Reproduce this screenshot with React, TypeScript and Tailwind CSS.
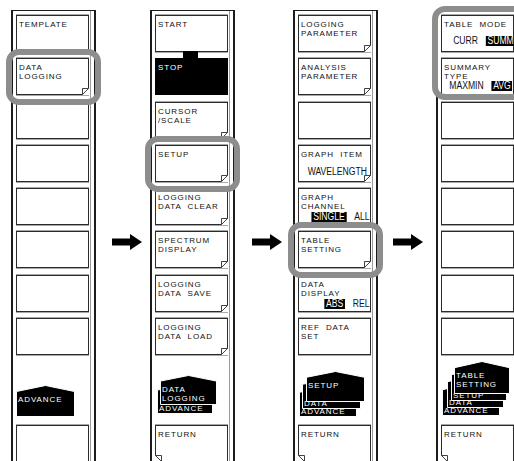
import type { ReactNode } from "react";

const label = "font-['Liberation_Sans',Arial,sans-serif] text-[8px] leading-[9px] tracking-[0.9px] uppercase";
const value = "font-['Liberation_Sans',Arial,sans-serif] text-[10px] leading-[10px]";

function Fold({ side }: { side: "r" | "l" }) {
  if (side === "r") {
    return (
      <svg className="absolute -right-px -bottom-px" width="7" height="7" viewBox="0 0 7 7">
        <polygon points="7,0 7,7 0,7" fill="#fff" />
        <polygon points="0.5,6.5 6.5,0.5 0.5,0.5" fill="#fff" stroke="#2b2b2b" strokeWidth="0.9" />
      </svg>
    );
  }
  return (
    <svg className="absolute -bottom-px -left-px" width="7" height="7" viewBox="0 0 7 7">
      <polygon points="0,0 0,7 7,7" fill="#fff" />
      <polygon points="6.5,6.5 0.5,0.5 6.5,0.5" fill="#fff" stroke="#2b2b2b" strokeWidth="0.9" />
    </svg>
  );
}

function Ring({ className }: { className: string }) {
  return <div className={`pointer-events-none absolute z-10 rounded-[13px] border-[6px] border-[#8d8d8d] ${className}`} />;
}

function Key({
  lines = [],
  mark,
  children,
}: {
  lines?: string[];
  mark?: "r" | "l";
  children?: ReactNode;
}) {
  return (
    <div className="relative h-[37px] shrink-0 border border-[#2b2b2b] bg-white pt-[4px] pr-[1px] pl-[2px] text-[#111] shadow-[0_1px_0_#a8a8a8,0_-1px_0_#a8a8a8]">
      {lines.length ? (
        <div className={label}>
          {lines.map((l) => (
            <div key={l} className="whitespace-pre">
              {l}
            </div>
          ))}
        </div>
      ) : null}
      {children}
      {mark ? <Fold side={mark} /> : null}
    </div>
  );
}

function Val({ items, className = "" }: { items: [string, boolean][]; className?: string }) {
  return (
    <div className={`flex justify-end ${className}`}>
      <div className={`flex origin-right scale-x-[0.86] gap-[9px] ${value}`}>
        {items.map(([t, on]) => (
          <span key={t} className={on ? "bg-black px-[2px] text-white" : ""}>
            {t}
          </span>
        ))}
      </div>
    </div>
  );
}

function Layer({ className, lines, front }: { className: string; lines: string[]; front?: boolean }) {
  return (
    <div className={`absolute ${className}`}>
      <svg className="absolute inset-0 h-full w-full" viewBox="0 0 60 32" preserveAspectRatio="none">
        <polygon
          points="0.5,6.5 30,0.5 59.5,6.5 59.5,31.5 0.5,31.5"
          fill="#000"
          stroke="#fff"
          strokeWidth="1"
          vectorEffect="non-scaling-stroke"
        />
      </svg>
      <div
        className={`absolute left-[2px] text-white ${label} ${
          front ? "top-[10px]" : "bottom-[1px] text-[7px] leading-[5px]"
        }`}
      >
        {lines.map((l) => (
          <div key={l}>{l}</div>
        ))}
      </div>
    </div>
  );
}

function Frame({ children }: { children: ReactNode }) {
  return (
    <div className="flex h-[460px] w-[85px] shrink-0 border-t border-r-2 border-l-2 border-[#1c1c1c]">
      <div className="flex w-[76px] shrink-0 flex-col gap-[6.3px] pt-[4px] pl-[3px]">{children}</div>
      <div className="w-px shrink-0" />
      <div className="w-px shrink-0 bg-[#9a9a9a]" />
      <div className="w-[3px] shrink-0" />
    </div>
  );
}

function Arrow({ className }: { className: string }) {
  return (
    <div className={className}>
      <svg width="30" height="16" viewBox="0 0 30 16">
        <polygon points="0,4.5 18,4.5 18,0 30,8 18,16 18,11.5 0,11.5" fill="#000" />
      </svg>
    </div>
  );
}

export default function App() {
  return (
    <div className="relative h-[461px] w-[514px] overflow-hidden bg-white">
      <div className="flex items-start pt-[10px] pl-[11px]">
        <Frame>
          <Key lines={["TEMPLATE"]} />
          <div className="relative">
            <Key lines={["DATA", "LOGGING"]} mark="r" />
            <Ring className="-top-[9px] -right-[12px] -bottom-[10px] -left-[10px]" />
          </div>
          <Key />
          <Key />
          <Key />
          <Key />
          <Key />
          <Key />
          <div className="relative h-[57px] shrink-0">
            <Layer className="top-[24px] left-0 h-[32px] w-[59px]" lines={["ADVANCE"]} front />
          </div>
          <Key />
        </Frame>

        <Arrow className="w-[54px] shrink-0 pt-[224px] pl-[16px]" />

        <Frame>
          <Key lines={["START"]} />
          <div className="relative h-[37px] shrink-0 bg-black pt-[5px] pl-[3px]">
            <div className={`${label} text-white`}>STOP</div>
            <div className="absolute -top-[7px] left-[28px] h-[8px] w-[15px] bg-black" />
          </div>
          <Key lines={["CURSOR", "/SCALE"]} mark="r" />
          <div className="relative">
            <Key lines={["SETUP"]} mark="r" />
            <Ring className="-top-[9px] -right-[12px] -bottom-[10px] -left-[10px]" />
          </div>
          <Key lines={["LOGGING", "DATA  CLEAR"]} mark="r" />
          <Key lines={["SPECTRUM", "DISPLAY"]} mark="r" />
          <Key lines={["LOGGING", "DATA  SAVE"]} mark="r" />
          <Key lines={["LOGGING", "DATA  LOAD"]} mark="r" />
          <div className="relative h-[57px] shrink-0">
            <Layer className="top-[23px] left-[2px] h-[30px] w-[56px]" lines={["ADVANCE"]} />
            <Layer className="top-[14px] left-[5px] h-[30px] w-[57px]" lines={["DATA", "LOGGING"]} front />
          </div>
          <Key lines={["RETURN"]} mark="l" />
        </Frame>

        <Arrow className="w-[58px] shrink-0 pt-[224px] pl-[17px]" />

        <Frame>
          <Key lines={["LOGGING", "PARAMETER"]} mark="r" />
          <Key lines={["ANALYSIS", "PARAMETER"]} mark="r" />
          <Key />
          <Key lines={["GRAPH  ITEM"]} mark="r">
            <Val className="mt-[8px] pr-[2px]" items={[["WAVELENGTH", false]]} />
          </Key>
          <Key lines={["GRAPH", "CHANNEL"]}>
            <Val className="mt-px" items={[["SINGLE", true], ["ALL", false]]} />
          </Key>
          <div className="relative">
            <Key lines={["TABLE", "SETTING"]} mark="r" />
            <Ring className="-top-[9px] -right-[12px] -bottom-[10px] -left-[10px]" />
          </div>
          <Key lines={["DATA", "DISPLAY"]}>
            <Val className="mt-px" items={[["ABS", true], ["REL", false]]} />
          </Key>
          <Key lines={["REF  DATA", "SET"]} />
          <div className="relative h-[57px] shrink-0">
            <Layer className="top-[25px] left-px h-[31px] w-[58px]" lines={["ADVANCE"]} />
            <Layer className="top-[17px] left-[4px] h-[31px] w-[59px]" lines={["DATA"]} />
            <Layer className="top-[10px] left-[8px] h-[31px] w-[59px]" lines={["SETUP"]} front />
          </div>
          <Key lines={["RETURN"]} mark="l" />
        </Frame>

        <Arrow className="w-[58px] shrink-0 pt-[224px] pl-[15px]" />

        <Frame>
          <div className="relative flex shrink-0 flex-col gap-[6.3px]">
            <Key lines={["TABLE  MODE"]}>
              <Val className="mt-[7px] -mr-[3px]" items={[["CURR", false], ["SUMM", true]]} />
            </Key>
            <Key lines={["SUMMARY", "TYPE"]}>
              <Val items={[["MAXMIN", false], ["AVG", true]]} />
            </Key>
            <Ring className="-top-[9px] -right-[12px] -bottom-[5px] -left-[9px]" />
          </div>
          <Key />
          <Key />
          <Key />
          <Key />
          <Key />
          <Key />
          <div className="relative h-[57px] shrink-0">
            <Layer className="top-[22px] left-px h-[33px] w-[58px]" lines={["ADVANCE"]} />
            <Layer className="top-[14px] left-[6px] h-[33px] w-[57px]" lines={["DATA"]} />
            <Layer className="top-[7px] left-[10px] h-[33px] w-[56px]" lines={["SETUP"]} />
            <Layer className="top-0 left-[13px] h-[33px] w-[56px]" lines={["TABLE", "SETTING"]} front />
          </div>
          <Key lines={["RETURN"]} mark="l" />
        </Frame>
      </div>
    </div>
  );
}
